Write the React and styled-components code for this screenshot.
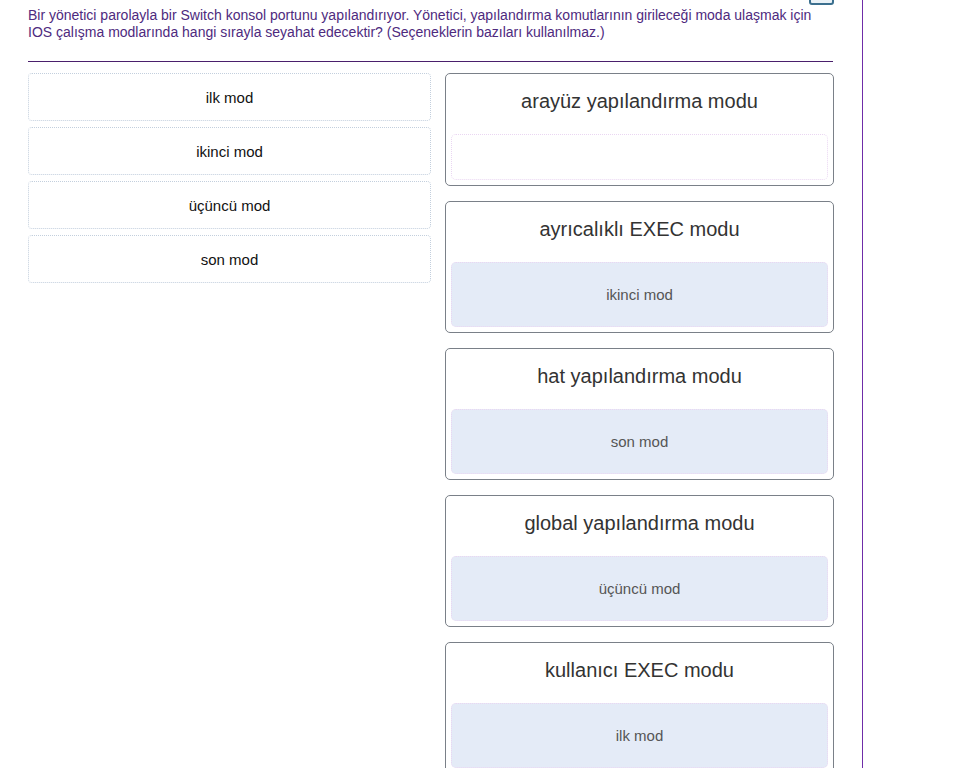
import styled, { createGlobalStyle } from "styled-components";

const GlobalStyle = createGlobalStyle`
  html, body {
    margin: 0;
    padding: 0;
    background: #fff;
    font-family: "Liberation Sans", Arial, sans-serif;
  }
`;

const options = ["ilk mod", "ikinci mod", "üçüncü mod", "son mod"];

const targets = [
  { label: "arayüz yapılandırma modu", answer: null },
  { label: "ayrıcalıklı EXEC modu", answer: "ikinci mod" },
  { label: "hat yapılandırma modu", answer: "son mod" },
  { label: "global yapılandırma modu", answer: "üçüncü mod" },
  { label: "kullanıcı EXEC modu", answer: "ilk mod" },
];

export default function App() {
  return (
    <>
      <GlobalStyle />
      <Page>
        <TopBar>
          <ToolButton />
        </TopBar>
        <Question>
          Bir yönetici parolayla bir Switch konsol portunu yapılandırıyor. Yönetici, yapılandırma komutlarının
          girileceği moda ulaşmak için IOS çalışma modlarında hangi sırayla seyahat edecektir? (Seçeneklerin
          bazıları kullanılmaz.)
        </Question>
        <Divider />
        <Board>
          <OptionList>
            {options.map((opt) => (
              <OptionItem key={opt}>{opt}</OptionItem>
            ))}
          </OptionList>
          <TargetList>
            {targets.map((t) => (
              <TargetCard key={t.label}>
                <TargetTitle>{t.label}</TargetTitle>
                <DropZone $filled={!!t.answer}>{t.answer && <PlacedItem>{t.answer}</PlacedItem>}</DropZone>
              </TargetCard>
            ))}
          </TargetList>
        </Board>
      </Page>
    </>
  );
}

const Page = styled.div`
  width: 806px;
  min-height: 768px;
  padding: 0 28px 0 28px;
  border-right: 1px solid #6f2da8;
  box-sizing: content-box;
  overflow: hidden;
`;

const TopBar = styled.div`
  display: flex;
  justify-content: flex-end;
  height: 3px;
  padding-right: 0;
`;

const ToolButton = styled.div`
  width: 21px;
  height: 20px;
  margin-top: -19px;
  border: 2px solid #3b6f8e;
  border-radius: 3px;
  background: #e9f1f6;
`;

const Question = styled.p`
  margin: 4px 0 0;
  font-size: 14px;
  line-height: 17px;
  color: #4e2a7e;
`;

const Divider = styled.hr`
  margin: 20px 0 0;
  border: 0;
  border-top: 1px solid #4a1f6c;
  width: 805px;
`;

const Board = styled.div`
  display: grid;
  grid-template-columns: 403px 389px;
  column-gap: 14px;
  margin-top: 11px;
  align-items: start;
`;

const OptionList = styled.div`
  display: flex;
  flex-direction: column;
  gap: 6px;
`;

const OptionItem = styled.div`
  height: 48px;
  box-sizing: border-box;
  border: 1px dotted #c3cfdd;
  border-radius: 4px;
  display: flex;
  align-items: center;
  justify-content: center;
  font-size: 15px;
  color: #111;
`;

const TargetList = styled.div`
  display: flex;
  flex-direction: column;
  gap: 15px;
`;

const TargetCard = styled.div`
  border: 1px solid #7a8088;
  border-radius: 5px;
  padding: 5px;
  display: flex;
  flex-direction: column;
`;

const TargetTitle = styled.div`
  height: 30px;
  line-height: 30px;
  padding-top: 7px;
  margin-bottom: 18px;
  text-align: center;
  font-size: 20px;
  color: #333;
`;

const DropZone = styled.div`
  height: ${(p) => (p.$filled ? "65px" : "46px")};
  box-sizing: border-box;
  border: 1px dotted #ead6f2;
  border-radius: 5px;
  background: ${(p) => (p.$filled ? "#e4ebf7" : "#fff")};
  display: flex;
`;

const PlacedItem = styled.div`
  flex: 1;
  display: flex;
  align-items: center;
  justify-content: center;
  font-size: 15px;
  color: #555;
`;
